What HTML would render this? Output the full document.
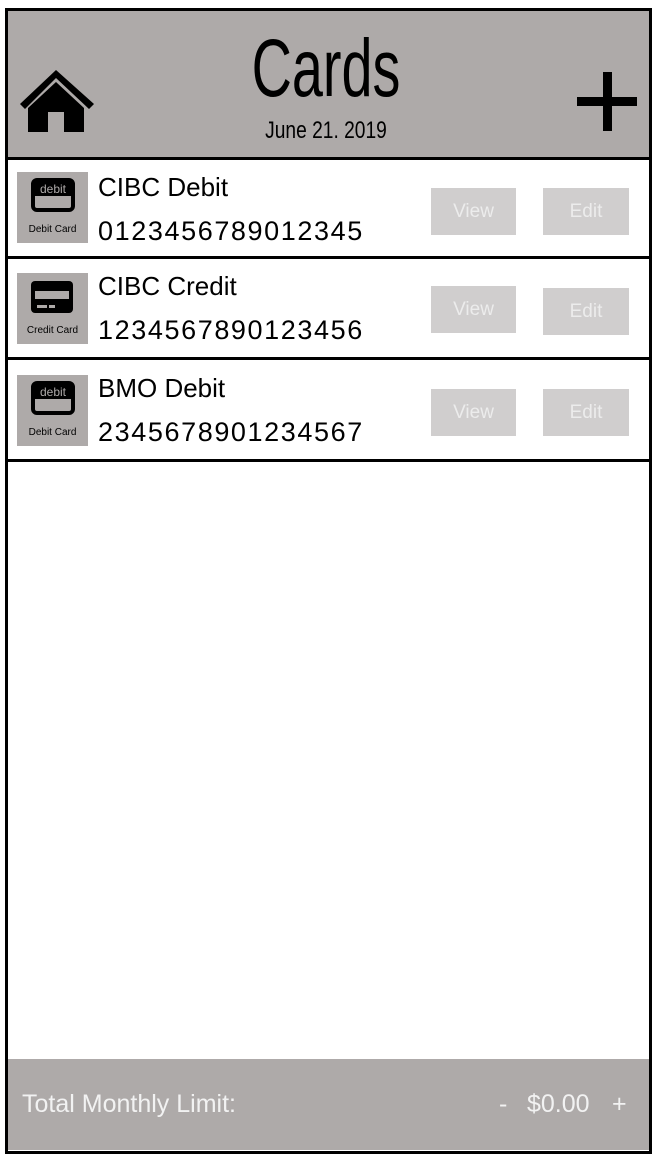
<!DOCTYPE html>
<html><head><meta charset="utf-8"><style>
body{margin:0;width:652px;height:1159px;background:#fff;position:relative;overflow:hidden;font-family:"Liberation Sans",sans-serif}
.frame{position:absolute;left:5px;top:8px;width:641px;height:1140px;border:3px solid #000;border-top-width:3px}
.hdr{position:absolute;left:8px;top:11px;width:641px;height:146px;background:#aeaaa9;border-bottom:3px solid #000}
.title{position:absolute;left:0;width:652px;top:22px;text-align:center;font-family:"Liberation Sans Narrow","Liberation Sans",sans-serif;font-size:82px;line-height:94px;color:#000;transform:scaleX(0.68)}
.date{position:absolute;left:0;width:652px;top:116px;text-align:center;font-family:"Liberation Sans Narrow","Liberation Sans",sans-serif;font-size:24px;line-height:30px;transform:scaleX(0.8)}
.row{position:absolute;left:8px;width:641px;border-bottom:3px solid #000}
.ic{position:absolute;left:9px;width:71px;height:71px;background:#aeaaa9}
.ic .lbl{position:absolute;left:0;width:71px;bottom:8px;text-align:center;font-size:10px;color:#000}
.name{position:absolute;left:90px;font-family:"Liberation Sans",sans-serif;font-size:26px;color:#000}
.num{position:absolute;left:90px;font-size:27px;color:#000;letter-spacing:1.6px}
.btn{position:absolute;width:85px;height:47px;background:#d0cece;color:#ececec;font-size:19px;text-align:center;line-height:47px}
.ftr{position:absolute;left:8px;top:1059px;width:641px;height:91px;background:#aeaaa9;color:#f2f2f2;font-size:25px}
</style></head><body>
<div class="frame"></div>
<div class="hdr"></div>
<div class="title">Cards</div>
<div class="date">June 21. 2019</div>
<svg style="position:absolute;left:18px;top:68px" width="78" height="66" viewBox="0 0 78 66">
<path d="M2 36 L38 2 L76 36 L71 41 L38 10 L7 41 Z" fill="#000"/>
<path d="M10 40 L38 14 L66 40 L66 64 L46 64 L46 44 L30 44 L30 64 L10 64 Z" fill="#000"/>
</svg>
<div style="position:absolute;left:577px;top:97px;width:60px;height:9px;background:#000"></div>
<div style="position:absolute;left:603px;top:72px;width:9px;height:59px;background:#000"></div>

<div class="row" style="top:160px;height:96px">
 <div class="ic" style="top:12px"><svg style="position:absolute;left:14px;top:6px" width="44" height="34" viewBox="0 0 44 34"><rect x="2" y="2" width="40" height="30" rx="4" fill="none" stroke="#000" stroke-width="4"/><rect x="2" y="2" width="40" height="16" fill="#000"/><text x="22" y="15" text-anchor="middle" font-size="12" fill="#aeaaa9" font-family="Liberation Sans">debit</text></svg><div class="lbl">Debit Card</div></div>
 <div class="name" style="top:12px">CIBC Debit</div>
 <div class="num" style="top:56px">0123456789012345</div>
 <div class="btn" style="left:423px;top:28px">View</div>
 <div class="btn" style="left:535px;top:28px;width:86px">Edit</div>
</div>
<div class="row" style="top:259px;height:98px">
 <div class="ic" style="top:14px"><svg style="position:absolute;left:12px;top:6px" width="46" height="36" viewBox="0 0 46 36"><rect x="2" y="2" width="42" height="32" rx="4" fill="#000"/><rect x="6" y="12" width="34" height="8" fill="#aeaaa9"/><rect x="8" y="26" width="10" height="3" fill="#aeaaa9"/><rect x="20" y="26" width="6" height="3" fill="#aeaaa9"/></svg><div class="lbl">Credit Card</div></div>
 <div class="name" style="top:12px">CIBC Credit</div>
 <div class="num" style="top:56px">1234567890123456</div>
 <div class="btn" style="left:423px;top:27px">View</div>
 <div class="btn" style="left:535px;top:29px;width:86px">Edit</div>
</div>
<div class="row" style="top:361px;height:98px">
 <div class="ic" style="top:14px"><svg style="position:absolute;left:14px;top:6px" width="44" height="34" viewBox="0 0 44 34"><rect x="2" y="2" width="40" height="30" rx="4" fill="none" stroke="#000" stroke-width="4"/><rect x="2" y="2" width="40" height="16" fill="#000"/><text x="22" y="15" text-anchor="middle" font-size="12" fill="#aeaaa9" font-family="Liberation Sans">debit</text></svg><div class="lbl">Debit Card</div></div>
 <div class="name" style="top:12px">BMO Debit</div>
 <div class="num" style="top:56px">2345678901234567</div>
 <div class="btn" style="left:423px;top:28px">View</div>
 <div class="btn" style="left:535px;top:28px;width:86px">Edit</div>
</div>

<div class="ftr">
 <div style="position:absolute;left:14px;top:31px">Total Monthly Limit:</div>
 <div style="position:absolute;left:491px;top:31px">-</div>
 <div style="position:absolute;left:519px;top:31px">$0.00</div>
 <div style="position:absolute;left:604px;top:31px">+</div>
</div>
</body></html>
